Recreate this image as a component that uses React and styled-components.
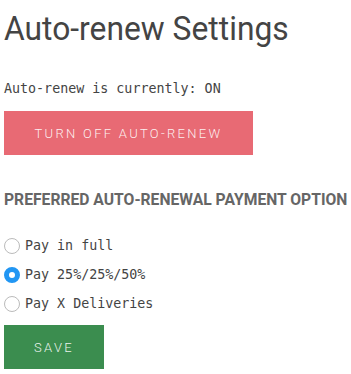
import React, { useState } from "react";
import styled, { createGlobalStyle } from "styled-components";

const GlobalStyle = createGlobalStyle`
  body {
    margin: 0;
    background: #fff;
  }
`;

const Page = styled.div`
  padding: 0 4px;
  font-family: "DejaVu Sans Mono", monospace;
  color: #444;
`;

const Title = styled.h1`
  margin: 0;
  padding-top: 8px;
  font-family: Roboto, sans-serif;
  font-weight: 400;
  font-size: 34px;
  line-height: 40px;
  color: #444;
  transform: scaleX(0.935);
  transform-origin: left center;
  white-space: nowrap;
`;

const Status = styled.p`
  margin: 33px 0 0;
  font-size: 13.33px;
  line-height: 16px;
  color: #444;
`;

const Button = styled.button`
  display: block;
  margin-top: ${(p) => p.$top || 0}px;
  width: ${(p) => p.$width}px;
  height: 44px;
  border: 0;
  background: ${(p) => p.$color};
  color: rgba(255, 255, 255, 0.9);
  font-family: Roboto, sans-serif;
  font-weight: 300;
  font-size: 13px;
  letter-spacing: 2.3px;
  text-transform: uppercase;
  cursor: pointer;
`;

const Section = styled.h2`
  margin: 35px 0 0;
  font-family: Roboto, sans-serif;
  font-weight: 700;
  font-size: 16.5px;
  line-height: 20px;
  color: #666;
  white-space: nowrap;
  transform: scaleX(0.95);
  transform-origin: left center;
`;

const Options = styled.div`
  margin-top: 27px;
  display: flex;
  flex-direction: column;
  gap: 12px;
`;

const Option = styled.label`
  display: flex;
  align-items: center;
  gap: 5px;
  font-size: 13.33px;
  line-height: 17px;
  color: #444;
  cursor: pointer;
`;

const Radio = styled.input`
  appearance: none;
  margin: 0;
  width: 16px;
  height: 16px;
  border-radius: 50%;
  border: 1.5px solid #bbb;
  background: #fff;
  box-sizing: border-box;
  cursor: pointer;

  &:checked {
    border: 5px solid #2196f3;
    background: #fff;
  }
`;

const options = ["Pay in full", "Pay 25%/25%/50%", "Pay X Deliveries"];

export default function App() {
  const [choice, setChoice] = useState(1);
  return (
    <Page>
      <GlobalStyle />
      <Title>Auto-renew Settings</Title>
      <Status>Auto-renew is currently: ON</Status>
      <Button $top={14} $width={249} $color="#e86a74">
        Turn off auto-renew
      </Button>
      <Section>PREFERRED AUTO-RENEWAL PAYMENT OPTION</Section>
      <Options>
        {options.map((o, i) => (
          <Option key={o}>
            <Radio
              type="radio"
              name="pay"
              checked={choice === i}
              onChange={() => setChoice(i)}
            />
            {o}
          </Option>
        ))}
      </Options>
      <Button $top={13} $width={100} $color="#3b8d4f">
        Save
      </Button>
    </Page>
  );
}
